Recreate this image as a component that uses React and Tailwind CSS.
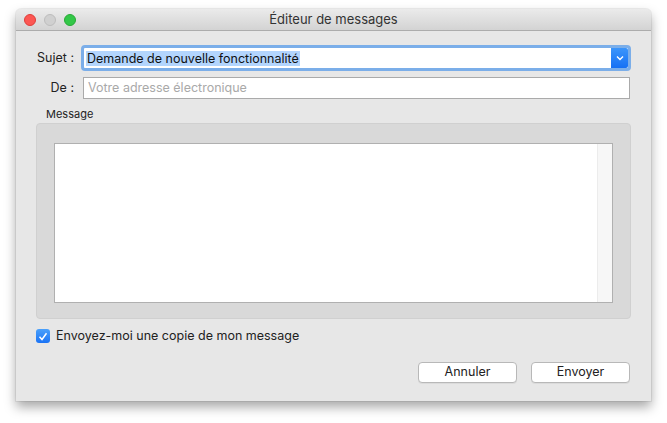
import React from 'react';

const font = { fontFamily: 'Inter, "Liberation Sans", sans-serif' };

const TrafficLights = () => (
    <div className="flex items-center gap-[8px]">
        <span className="w-[12px] h-[12px] rounded-full bg-[#fc5753] border border-[#df3d39]" />
        <span className="w-[12px] h-[12px] rounded-full bg-[#d0d0d0] border border-[#bdbdbd]" />
        <span className="w-[12px] h-[12px] rounded-full bg-[#33c748] border border-[#27aa35]" />
    </div>
);

export default function App() {
    return (
        <div className="w-[667px] h-[423px] bg-white pt-[9px] pl-[16px]" style={font}>
            <div className="w-[635px] h-[392px] bg-[#e7e7e7] rounded-t-[5px] shadow-[0_6px_12px_rgba(0,0,0,0.35),0_0_0_1px_rgba(0,0,0,0.06)] flex flex-col">
                {/* Title bar */}
                <div className="h-[22px] relative flex items-center px-[8px] rounded-t-[5px] bg-gradient-to-b from-[#ebebeb] to-[#d3d3d3] border-b border-[#acacac]">
                    <TrafficLights />
                    <div className="absolute inset-0 flex items-center justify-center text-[13px] text-[#333]">
                        Éditeur de messages
                    </div>
                </div>

                <div className="flex flex-col pl-[20px] pr-[20px]">
                    {/* Sujet */}
                    <div className="flex items-center mt-[14px] h-[26px]">
                        <label className="w-[38px] text-right text-[12.5px] text-[#222] mr-[7px] whitespace-nowrap">Sujet :</label>
                        <div className="flex-1 flex items-stretch h-[26px] rounded-[4px] border-[3px] border-[#7baee9] bg-white">
                            <div className="flex-1 flex items-center pl-[2px]">
                                <span className="bg-[#b3d5fd] text-[12.5px] text-[#111] leading-[15px] px-[1px]">Demande de nouvelle fonctionnalité</span>
                            </div>
                            <div className="w-[17px] bg-gradient-to-b from-[#3b95fb] to-[#1570f4] rounded-r-[2px] flex items-center justify-center">
                                <svg width="8" height="6" viewBox="0 0 8 6"><path d="M1 1.5 L4 4.5 L7 1.5" stroke="white" strokeWidth="1.4" fill="none" /></svg>
                            </div>
                        </div>
                    </div>

                    {/* De */}
                    <div className="flex items-center mt-[6px] h-[22px]">
                        <label className="w-[38px] text-right text-[12.5px] text-[#222] mr-[9px]">De :</label>
                        <div className="flex-1 h-[22px] bg-white border border-[#aaaaaa] flex items-center pl-[4px] mr-[1px] text-[12.5px] text-[#a9a9a9]">
                            Votre adresse électronique
                        </div>
                    </div>

                    {/* Message group */}
                    <div className="text-[11px] text-[#222] ml-[10px] mt-[9px] leading-[13px]">Message</div>
                    <div className="mt-[2px] h-[196px] bg-[#d9d9d9] rounded-[4px] border border-[#d0d0d0] pt-[19px] pl-[17px] pr-[17px]">
                        <div className="h-[160px] bg-white border border-[#b0b0b0] flex">
                            <div className="flex-1" />
                            <div className="w-[15px] bg-[#f7f7f7] border-l border-[#ececec]" />
                        </div>
                    </div>

                    {/* Checkbox */}
                    <div className="flex items-center mt-[9px] h-[16px]">
                        <span className="w-[14px] h-[14px] rounded-[3px] bg-gradient-to-b from-[#4aa0fb] to-[#1a73f5] flex items-center justify-center">
                            <svg width="10" height="9" viewBox="0 0 10 9"><path d="M1.5 4.8 L4 7.5 L8.5 1.2" stroke="white" strokeWidth="1.5" fill="none" /></svg>
                        </span>
                        <span className="ml-[6px] text-[12.5px] text-[#222]">Envoyez-moi une copie de mon message</span>
                    </div>

                    {/* Buttons */}
                    <div className="flex justify-end gap-[14px] mt-[18px] pr-[1px]">
                        <button className="w-[99px] h-[21px] bg-white border border-[#b8b8b8] rounded-[4px] text-[12.5px] text-[#222] shadow-[0_1px_0_rgba(0,0,0,0.05)]">Annuler</button>
                        <button className="w-[99px] h-[21px] bg-white border border-[#b8b8b8] rounded-[4px] text-[12.5px] text-[#222] shadow-[0_1px_0_rgba(0,0,0,0.05)]">Envoyer</button>
                    </div>
                </div>
            </div>
        </div>
    );
}
